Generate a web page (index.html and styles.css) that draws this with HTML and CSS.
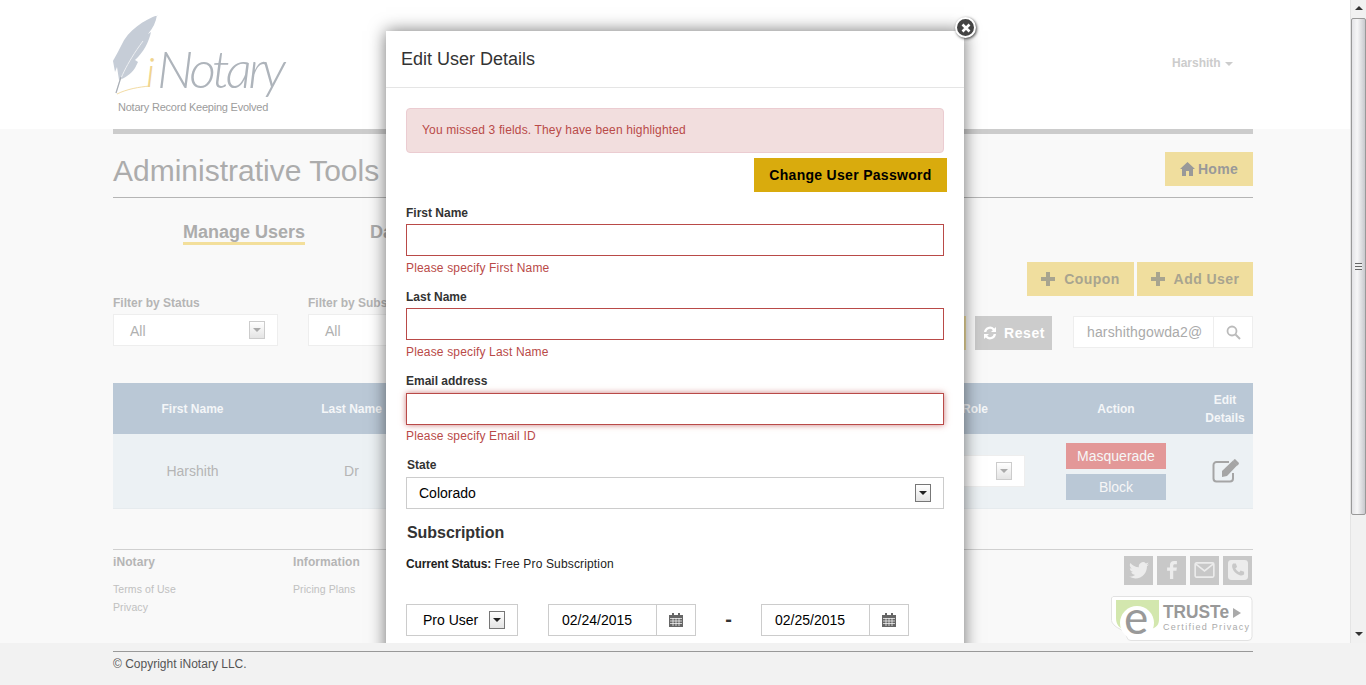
FILE: index.html
```html
<!DOCTYPE html>
<html lang="en">
  <head>
    <meta charset="UTF-8" />
    <meta name="viewport" content="width=device-width, initial-scale=1.0" />
    <title>iNotary - Administrative Tools</title>
    <link rel="stylesheet" href="styles.css">
  </head>
  <body>
    <div class="screen">
      <div class="viewport">
        <header class="topbar">
          <svg class="logo" width="180" height="102" viewBox="0 0 180 102">
            <path d="M45 0C31 5 15 15 8 31 4 39 1 44 0 46l2 11 2-5 2 13c6-2 12-6 16-12l3-6-3-2c8-7 14-18 16-28l-3 2c5-6 8-12 9-19z" fill="#c6cdd7"/>
            <path d="M3 78C6 66 13 49 30 26" fill="none" stroke="#eef0f3" stroke-width="1"/>
            <path d="M3 78C5 72 6 68 8 62" fill="none" stroke="#a9aeb5" stroke-width="1.2"/>
            <path d="M4 79C14 74 26 72 37 71" fill="none" stroke="#f3dca4" stroke-width="1"/>
            <text x="33" y="72" class="logo-i">i</text>
            <text x="44" y="73" class="logo-name">Notary</text>
            <text x="5" y="96" class="logo-tag">Notary Record Keeping Evolved</text>
          </svg>
          <div class="user-menu">Harshith <span class="caret"></span></div>
        </header>

        <main class="wrap">
          <div class="title-row">
            <h1>Administrative Tools</h1>
            <a class="btn btn-home">
              <svg width="15" height="14" viewBox="0 0 15 14"><path d="M7.5 0L15 7h-2v7H9V9H6v5H2V7H0z" fill="#999"/></svg>
              Home
            </a>
          </div>

          <nav class="tabs">
            <a class="tab tab-active">Manage Users</a>
            <a class="tab">Dashboard</a>
          </nav>

          <div class="actions">
            <a class="btn btn-add">
              <svg width="14" height="14" viewBox="0 0 14 14"><path d="M5 0h4v5h5v4H9v5H5V9H0V5h5z" fill="#a8a48f"/></svg>
              Coupon
            </a>
            <a class="btn btn-add">
              <svg width="14" height="14" viewBox="0 0 14 14"><path d="M5 0h4v5h5v4H9v5H5V9H0V5h5z" fill="#a8a48f"/></svg>
              Add User
            </a>
          </div>

          <div class="filters">
            <div class="filter">
              <label>Filter by Status</label>
              <div class="fake-select dim">All<span class="arrow"></span></div>
            </div>
            <div class="filter filter-second">
              <label>Filter by Subscription</label>
              <div class="fake-select dim">All<span class="arrow"></span></div>
            </div>
            <div class="search-group">
              <a class="btn btn-go">Go</a>
              <a class="btn btn-reset">
                <svg width="16" height="16" viewBox="0 0 16 16"><path d="M2 7a6 6 0 0 1 10.300-3.600L14 2v5H9l1.800-1.800A3.700 3.700 0 0 0 4.300 7zM14 9a6 6 0 0 1-10.300 3.600L2 14V9h5l-1.800 1.800A3.700 3.700 0 0 0 11.700 9z" fill="#fff"/></svg>
                Reset
              </a>
              <div class="search">
                <span class="search-text">harshithgowda2@</span>
                <span class="search-btn">
                  <svg width="15" height="15" viewBox="0 0 15 15"><circle cx="6" cy="6" r="4.500" fill="none" stroke="#bbb" stroke-width="1.800"/><path d="M9.500 9.500L14 14" stroke="#bbb" stroke-width="2"/></svg>
                </span>
              </div>
            </div>
          </div>

          <table class="users">
            <colgroup>
              <col class="col-name"><col class="col-name"><col class="col-mid"><col class="col-role"><col class="col-action"><col class="col-edit">
            </colgroup>
            <thead>
              <tr>
                <th>First Name</th><th>Last Name</th><th>Email</th><th>Role</th><th>Action</th><th>Edit<br>Details</th>
              </tr>
            </thead>
            <tbody>
              <tr>
                <td>Harshith</td>
                <td>Dr</td>
                <td></td>
                <td><div class="fake-select dim role-select"><span class="arrow"></span></div></td>
                <td class="action-cell">
                  <a class="row-btn row-btn-red">Masquerade</a>
                  <a class="row-btn row-btn-blue">Block</a>
                </td>
                <td>
                  <svg class="edit-icon" width="28" height="24" viewBox="0 0 28 24">
                    <path d="M17 3H4.500A3 3 0 0 0 1.500 6v13.500a3 3 0 0 0 3 3H18a3 3 0 0 0 3-3V14" fill="none" stroke="#a5a5a5" stroke-width="2"/>
                    <path d="M10 12L21 1.500l4.500 4.500L15 17l-5 1z" fill="#a5a5a5"/>
                    <path d="M22 0.500l1-.5 4 4-.5 1.500-1 1-4.500-4.500z" fill="#a5a5a5"/>
                  </svg>
                </td>
              </tr>
            </tbody>
          </table>

          <footer class="site-links">
            <div class="link-col">
              <h4>iNotary</h4>
              <a>Terms of Use</a>
              <a>Privacy</a>
            </div>
            <div class="link-col">
              <h4>Information</h4>
              <a>Pricing Plans</a>
            </div>
            <div class="trust-col">
              <div class="social">
                <span class="social-box">
                  <svg width="20" height="17" viewBox="0 0 24 20"><path d="M24 2.400c-.9.400-1.800.7-2.800.8 1-.6 1.800-1.600 2.200-2.700-1 .6-2 1-3.100 1.200A4.900 4.900 0 0 0 11.900 6.200C7.800 6 4.200 4 1.700.9c-1.300 2.200-.7 5.100 1.500 6.600-.8 0-1.600-.2-2.200-.6 0 2.400 1.700 4.400 3.900 4.900-.7.200-1.500.2-2.200.1.600 2 2.400 3.400 4.600 3.400A9.900 9.900 0 0 1 0 17.300 14 14 0 0 0 7.500 19.500c9.100 0 14.300-7.700 14-14.600 1-.7 1.800-1.600 2.500-2.500z" fill="#ececec"/></svg>
                </span>
                <span class="social-box">
                  <svg width="10" height="18" viewBox="0 0 12 22"><path d="M3.500 22V12H0V8h3.500V5C3.500 1.700 5.500 0 8.500 0H12v4H9.500C8 4 7.500 4.700 7.500 6v2H12l-.6 4H7.500v10z" fill="#ececec"/></svg>
                </span>
                <span class="social-box">
                  <svg width="21" height="16" viewBox="0 0 23 18"><rect x="1" y="1" width="21" height="16" rx="1.500" fill="none" stroke="#ececec" stroke-width="1.800"/><path d="M1.500 2l10 8 10-8" fill="none" stroke="#ececec" stroke-width="1.800"/></svg>
                </span>
                <span class="social-box">
                  <svg width="20" height="20" viewBox="0 0 23 23"><rect width="23" height="23" rx="4" fill="#ececec"/><path d="M6 4l3 0 1.500 4-2 1.500c.8 2 2.500 3.700 4.500 4.500l1.500-2 4 1.500 0 3c-1 1.500-3 1.500-5 1C9 16 6 13 5 9 4.500 7 4.700 5 6 4z" fill="#c8c8c8"/></svg>
                </span>
              </div>
              <svg class="truste" width="142" height="45" viewBox="0 0 142 45">
                <path d="M2 .5H137a4 4 0 0 1 4 4v36a4 4 0 0 1-4 4H20a4 4 0 0 1-4-3l-2-5c-1-2-3-2-6-4-4-2-7-5-7.500-8V2z" fill="#fff" stroke="#e2e2e2"/>
                <path d="M5 4H48v20c0 6-5 9-10 9H14C8 33 5 28 5 22z" fill="#d3e7ae"/>
                <circle cx="26" cy="27" r="17" fill="#fff"/>
                <text x="13" y="38" class="truste-e">e</text>
                <text x="52" y="22" class="truste-name" textLength="66" lengthAdjust="spacingAndGlyphs">TRUSTe</text>
                <path d="M122 12l8 5-8 5z" fill="#aaa"/>
                <text x="52" y="34" class="truste-sub" textLength="86">Certified Privacy</text>
              </svg>
            </div>
          </footer>
        </main>

        <section class="modal">
          <a class="modal-close">
            <svg width="10" height="10" viewBox="0 0 10 10"><path d="M1.500 1.500l7 7M8.500 1.500l-7 7" stroke="#fff" stroke-width="2.600"/></svg>
          </a>
          <div class="modal-head">Edit User Details</div>
          <form class="modal-body">
            <div class="alert">You missed 3 fields. They have been highlighted</div>
            <div class="pass-row"><button type="button" class="btn-pass">Change User Password</button></div>

            <div class="field field-first">
              <label>First Name</label>
              <input type="text" class="input-error" />
              <p class="error-msg">Please specify First Name</p>
            </div>
            <div class="field">
              <label>Last Name</label>
              <input type="text" class="input-error" />
              <p class="error-msg">Please specify Last Name</p>
            </div>
            <div class="field">
              <label>Email address</label>
              <input type="text" class="input-error input-focus" />
              <p class="error-msg error-msg-tight">Please specify Email ID</p>
            </div>
            <div class="field">
              <label class="label-state">State</label>
              <div class="fake-select state-select">Colorado<span class="arrow arrow-dark"></span></div>
            </div>

            <h3 class="sub-title">Subscription</h3>
            <p class="sub-status"><b>Current Status:</b> Free Pro Subscription</p>

            <div class="plan-row">
              <div class="fake-select plan-select">Pro User<span class="arrow arrow-dark"></span></div>
              <div class="date-box">
                <span class="date-text">02/24/2015</span>
                <span class="date-btn">
                  <svg width="14" height="14" viewBox="0 0 14 14"><path d="M0 2h14v12H0z" fill="#666"/><path d="M3 0h2v3H3zM9 0h2v3H9z" fill="#666"/><path d="M1 5.500h12M1 8h12M1 10.500h12M4 5v8M7 5v8M10 5v8" stroke="#fff" stroke-width=".7"/></svg>
                </span>
              </div>
              <span class="date-dash">-</span>
              <div class="date-box">
                <span class="date-text">02/25/2015</span>
                <span class="date-btn">
                  <svg width="14" height="14" viewBox="0 0 14 14"><path d="M0 2h14v12H0z" fill="#666"/><path d="M3 0h2v3H3zM9 0h2v3H9z" fill="#666"/><path d="M1 5.500h12M1 8h12M1 10.500h12M4 5v8M7 5v8M10 5v8" stroke="#fff" stroke-width=".7"/></svg>
                </span>
              </div>
            </div>
          </form>
        </section>

        <div class="scrollbar">
          <span class="scroll-up"></span>
          <span class="scroll-thumb"><span class="scroll-grip"></span></span>
          <span class="scroll-down"></span>
        </div>
      </div>

      <div class="copyright">
        <p>© Copyright iNotary LLC.</p>
      </div>
    </div>
  </body>
</html>
```

FILE: styles.css
```css
* {
  box-sizing: border-box;
}
html, body {
  margin: 0;
  height: 100%;
  overflow: hidden;
}
body {
  font-family: "Liberation Sans", Arial, sans-serif;
  font-size: 12px;
  color: #333;
  background-color: #f9f9f9;
}
.screen {
  display: flex;
  flex-direction: column;
  height: 685px;
}
.viewport {
  position: relative;
  height: 643px;
  overflow: hidden;
  flex: none;
}

/* header */
.topbar {
  display: flex;
  justify-content: space-between;
  height: 129px;
  padding: 15px 133px 0 113px;
  background-color: #fff;
}
.logo {
  overflow: visible;
}
.logo-i {
  font-family: Lato, sans-serif;
  font-style: italic;
  font-size: 42px;
  font-weight: 300;
  fill: #f0d48e;
}
.logo-name {
  font-family: Lato, sans-serif;
  font-style: italic;
  font-size: 52px;
  font-weight: 300;
  letter-spacing: -3.5px;
  fill: #aeb4bb;
}
.logo-tag {
  font-size: 11px;
  letter-spacing: -0.22px;
  fill: #9c9c9c;
}
.user-menu {
  margin-top: 41px;
  font-weight: bold;
  color: #ccc;
}
.caret {
  display: inline-block;
  margin-left: 1px;
  vertical-align: middle;
  border-top: 4px solid #ccc;
  border-left: 4px solid transparent;
  border-right: 4px solid transparent;
}

/* page body */
.wrap {
  width: 1140px;
  margin-left: 113px;
  border-top: 5px solid #ccc;
}
.title-row {
  display: flex;
  justify-content: space-between;
  align-items: center;
  padding: 18px 0 11px;
  border-bottom: 1px solid #b5b5b5;
}
h1 {
  height: 34px;
  margin: 0;
  font-size: 30px;
  font-weight: normal;
  line-height: 38px;
  color: #acacac;
}
.btn {
  display: inline-flex;
  align-items: center;
  justify-content: center;
  height: 34px;
  font-size: 14px;
  font-weight: bold;
}
.btn-home {
  gap: 3px;
  width: 88px;
  background-color: #f0de9e;
  color: #999;
  letter-spacing: 0.3px;
}
.tabs {
  display: flex;
  gap: 65px;
  margin: 23px 0 0 70px;
}
.tab {
  height: 24px;
  font-size: 18px;
  font-weight: bold;
  line-height: 22px;
  color: #acacac;
}
.tab-active {
  border-bottom: 3px solid #f3df9b;
}
.actions {
  display: flex;
  justify-content: flex-end;
  gap: 3px;
  margin-top: 17px;
}
.btn-add {
  gap: 9px;
  background-color: #f0de9e;
  color: #a8a48f;
  letter-spacing: 0.45px;
}
.btn-add:first-child {
  width: 107px;
}
.btn-add:last-child {
  width: 116px;
}

/* filters */
.filters {
  display: flex;
  align-items: flex-start;
}
.filter {
  width: 165px;
}
.filter-second {
  margin-left: 30px;
}
.filter label {
  display: block;
  margin-bottom: 4px;
  line-height: 14px;
  font-weight: bold;
  color: #b5b5b5;
}
.filter .fake-select {
  padding-top: 1px;
}
.filter .arrow {
  margin-top: -1px;
}
.fake-select {
  display: flex;
  align-items: center;
  justify-content: space-between;
  height: 32px;
  padding: 0 12px 0 16px;
  border: 1px solid #ccc;
  background-color: #fff;
  font-size: 14px;
  color: #000;
}
.fake-select.dim {
  border: 1px solid #eee;
  color: #b0b0b0;
}
.arrow {
  position: relative;
  flex: none;
  width: 16px;
  height: 18px;
  margin-left: auto;
  border: 1px solid #ccc;
  background: linear-gradient(#fff, #e4e4e4);
}
.arrow::after {
  content: "";
  position: absolute;
  top: 6px;
  left: 3px;
  border-top: 4px solid #aaa;
  border-left: 4px solid transparent;
  border-right: 4px solid transparent;
}
.arrow-dark {
  border-color: #777;
}
.arrow-dark::after {
  border-top-color: #222;
}
.search-group {
  display: flex;
  align-items: flex-start;
  margin: 20px 0 0 auto;
}
.btn-go {
  width: 60px;
  margin-right: 9px;
  background-color: #f0de9e;
  color: #a8a48f;
}
.btn-reset {
  gap: 6px;
  width: 77px;
  margin-right: 21px;
  background-color: #ccc;
  color: #fff;
  letter-spacing: 0.6px;
}
.search {
  display: flex;
  width: 180px;
  height: 32px;
  border: 1px solid #eee;
  background-color: #fff;
  font-size: 14px;
  color: #aaa;
}
.search-text {
  flex: 1;
  padding-left: 13px;
  line-height: 30px;
  letter-spacing: 0.15px;
}
.search-btn {
  display: flex;
  align-items: center;
  justify-content: center;
  width: 39px;
  border-left: 1px solid #eee;
}

/* table */
.users {
  width: 100%;
  margin-top: 33px;
  border-collapse: collapse;
  table-layout: fixed;
}
.col-name { width: 159px; }
.col-mid { width: 484px; }
.col-role { width: 120px; }
.col-action { width: 162px; }
.col-edit { width: 56px; }
.users th {
  height: 51px;
  padding: 1px 0 0;
  background-color: #bac8d6;
  font-size: 12px;
  line-height: 18px;
  color: #f4f6f8;
}
.users td {
  height: 74px;
  padding: 0;
  background-color: #ecf1f4;
  border-bottom: 1px solid #e6ebee;
  text-align: center;
  font-size: 14px;
  color: #b5b5b5;
}
.users .action-cell {
  padding-top: 2px;
}
.role-select {
  width: 120px;
  height: 32px;
  margin-left: -10px;
  padding-right: 12px;
}
.row-btn {
  display: block;
  width: 100px;
  height: 26px;
  margin: 0 auto;
  line-height: 26px;
  color: #f6f6f6;
}
.row-btn-red {
  background-color: #e39898;
}
.row-btn-blue {
  margin-top: 5px;
  background-color: #bac8d6;
}
.edit-icon {
  display: block;
  margin: 0 auto;
  transform: translateX(1px);
}

/* footer links */
.site-links {
  display: flex;
  margin-top: 40px;
  border-top: 1px solid #d0d0d0;
}
.link-col {
  display: flex;
  flex-direction: column;
  width: 180px;
  padding-top: 5px;
  color: #c0c0c0;
  font-size: 10.500px;
  letter-spacing: 0.08px;
}
.link-col h4 {
  margin: 0 0 13px;
  font-size: 12px;
  line-height: 14px;
  color: #b5b5b5;
}
.link-col a {
  height: 18px;
  line-height: 14px;
}
.trust-col {
  display: flex;
  flex-direction: column;
  align-items: flex-end;
  margin-left: auto;
  padding-top: 6px;
}
.social {
  display: flex;
  gap: 4px;
  margin-right: 1px;
}
.social-box {
  display: flex;
  align-items: center;
  justify-content: center;
  width: 29px;
  height: 29px;
  background-color: #c8c8c8;
}
.truste {
  display: block;
  margin-top: 11px;
  overflow: visible;
}
.truste-e {
  font-family: Lato, sans-serif;
  font-size: 46px;
  font-weight: normal;
  fill: #999;
}
.truste-name {
  font-size: 18px;
  font-weight: bold;
  fill: #999;
}
.truste-sub {
  font-size: 9px;
  fill: #aaa;
}

/* modal */
.modal {
  position: absolute;
  left: 386px;
  top: 31px;
  width: 578px;
  height: 720px;
  background-color: #fff;
  box-shadow: 0 0 16px rgba(0, 0, 0, 0.55);
}
.modal-close {
  position: absolute;
  right: -12px;
  top: -14px;
  display: flex;
  align-items: center;
  justify-content: center;
  width: 21px;
  height: 21px;
  border: 2px solid #fff;
  border-radius: 50%;
  background-color: #444;
  box-shadow: 1px 1px 3px rgba(0, 0, 0, 0.7);
}
.modal-head {
  height: 57px;
  padding-left: 15px;
  border-bottom: 1px solid #e5e5e5;
  font-size: 18px;
  line-height: 56px;
  color: #333;
}
.modal-body {
  padding: 20px;
}
.alert {
  width: 538px;
  height: 45px;
  padding-left: 15px;
  border: 1px solid #ebccd1;
  border-radius: 4px;
  background-color: #f2dede;
  line-height: 43px;
  letter-spacing: 0.15px;
  color: #b94a48;
}
.pass-row {
  display: flex;
  justify-content: flex-end;
  margin: 5px -3px 0 0;
  width: 541px;
}
.btn-pass {
  width: 193px;
  height: 34px;
  padding: 0;
  border: none;
  background-color: #d9ab0d;
  font-family: inherit;
  font-size: 14px;
  font-weight: bold;
  letter-spacing: 0.3px;
  color: #000;
}
.field {
  width: 538px;
  margin-top: 15px;
}
.field-first {
  margin-top: 14px;
}
.field label {
  display: block;
  margin-bottom: 4px;
  line-height: 14px;
  font-weight: bold;
  color: #333;
}
.field input {
  display: block;
  width: 100%;
  height: 32px;
  padding: 0 12px;
  background-color: #fff;
}
.input-error {
  border: 1px solid #b94a48;
}
.input-focus {
  margin-top: 5px;
  box-shadow: 0 0 6px rgba(185, 74, 72, 0.7);
}
.error-msg {
  margin: 5px 0 0;
  line-height: 14px;
  letter-spacing: 0.16px;
  color: #b94a48;
}
.error-msg-tight {
  margin-top: 4px;
}
.field .label-state {
  margin-bottom: 5px;
  margin-left: 1px;
}
.state-select {
  padding-left: 12px;
}
.sub-title {
  margin: 14px 0 0 1px;
  font-size: 16px;
  line-height: 20px;
  letter-spacing: -0.05px;
  color: #333;
}
.sub-status {
  margin: 14px 0 0;
  line-height: 14px;
  letter-spacing: 0.15px;
  color: #222;
}
.sub-status b {
  letter-spacing: -0.15px;
}
.plan-row {
  display: flex;
  margin-top: 33px;
}
.plan-select {
  width: 112px;
  padding: 0 12px 0 16px;
}
.date-box {
  display: flex;
  width: 148px;
  height: 32px;
  border: 1px solid #ccc;
  font-size: 14px;
  color: #000;
}
.plan-select + .date-box {
  margin-left: 30px;
}
.date-text {
  width: 107px;
  padding-left: 13px;
  line-height: 30px;
}
.date-btn {
  display: flex;
  flex: 1;
  align-items: center;
  justify-content: center;
  border-left: 1px solid #ccc;
}
.date-dash {
  width: 65px;
  font-size: 20px;
  font-weight: bold;
  line-height: 30px;
  text-align: center;
}

/* scrollbar */
.scrollbar {
  position: absolute;
  top: 0;
  right: 0;
  bottom: 0;
  display: flex;
  flex-direction: column;
  align-items: center;
  width: 16px;
  border-left: 1px solid #e4e4e4;
  background-color: #f1f1f1;
}
.scroll-up, .scroll-down {
  flex: none;
  height: 18px;
  padding-top: 6px;
}
.scroll-up::after {
  content: "";
  display: block;
  border-bottom: 4px solid #333;
  border-left: 4px solid transparent;
  border-right: 4px solid transparent;
}
.scroll-down {
  margin-top: auto;
  padding-top: 7px;
}
.scroll-down::after {
  content: "";
  display: block;
  border-top: 4px solid #333;
  border-left: 4px solid transparent;
  border-right: 4px solid transparent;
}
.scroll-thumb {
  display: flex;
  align-items: center;
  justify-content: center;
  flex: none;
  width: 15px;
  height: 497px;
  border: 1px solid #999;
  border-radius: 2px;
  background: linear-gradient(90deg, #e3e3e6, #f6f6f7 40%, #c9c9ce);
}
.scroll-grip {
  width: 7px;
  height: 7px;
  border-top: 1px solid #666;
  border-bottom: 1px solid #666;
  background: linear-gradient(#f1f1f1 40%, #666 40%, #666 60%, #f1f1f1 60%);
}

/* bottom strip */
.copyright {
  flex: 1;
  position: relative;
  padding: 8px 113px 0;
  background-color: #f2f2f2;
}
.copyright p {
  margin: 0;
  padding-top: 5px;
  border-top: 1px solid #999;
  line-height: 14px;
  color: #555;
}
```
